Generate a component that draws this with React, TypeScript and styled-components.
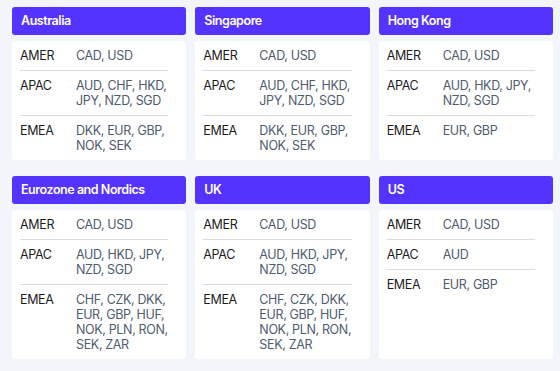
import React from "react";
import styled, { createGlobalStyle } from "styled-components";

type Region = { name: string; currencies: string };
type Centre = { title: string; regions: Region[] };

const centres: Centre[] = [
  {
    title: "Australia",
    regions: [
      { name: "AMER", currencies: "CAD, USD" },
      { name: "APAC", currencies: "AUD, CHF, HKD, JPY, NZD, SGD" },
      { name: "EMEA", currencies: "DKK, EUR, GBP, NOK, SEK" },
    ],
  },
  {
    title: "Singapore",
    regions: [
      { name: "AMER", currencies: "CAD, USD" },
      { name: "APAC", currencies: "AUD, CHF, HKD, JPY, NZD, SGD" },
      { name: "EMEA", currencies: "DKK, EUR, GBP, NOK, SEK" },
    ],
  },
  {
    title: "Hong Kong",
    regions: [
      { name: "AMER", currencies: "CAD, USD" },
      { name: "APAC", currencies: "AUD, HKD, JPY, NZD, SGD" },
      { name: "EMEA", currencies: "EUR, GBP" },
    ],
  },
  {
    title: "Eurozone and Nordics",
    regions: [
      { name: "AMER", currencies: "CAD, USD" },
      { name: "APAC", currencies: "AUD, HKD, JPY, NZD, SGD" },
      {
        name: "EMEA",
        currencies: "CHF, CZK, DKK, EUR, GBP, HUF, NOK, PLN, RON, SEK, ZAR",
      },
    ],
  },
  {
    title: "UK",
    regions: [
      { name: "AMER", currencies: "CAD, USD" },
      { name: "APAC", currencies: "AUD, HKD, JPY, NZD, SGD" },
      {
        name: "EMEA",
        currencies: "CHF, CZK, DKK, EUR, GBP, HUF, NOK, PLN, RON, SEK, ZAR",
      },
    ],
  },
  {
    title: "US",
    regions: [
      { name: "AMER", currencies: "CAD, USD" },
      { name: "APAC", currencies: "AUD" },
      { name: "EMEA", currencies: "EUR, GBP" },
    ],
  },
];

const GlobalStyle = createGlobalStyle`
  body {
    margin: 0;
    background: #f2f5f9;
    font-family: Inter, "Liberation Sans", sans-serif;
  }
`;

export default function App() {
  return (
    <>
      <GlobalStyle />
      <Grid>
        {centres.map((centre) => (
          <Card key={centre.title}>
            <CardHeader>{centre.title}</CardHeader>
            <CardBody>
              {centre.regions.map((region) => (
                <Row key={region.name}>
                  <RegionName>{region.name}</RegionName>
                  <Currencies>{region.currencies}</Currencies>
                </Row>
              ))}
            </CardBody>
          </Card>
        ))}
      </Grid>
    </>
  );
}

const Grid = styled.div`
  display: grid;
  grid-template-columns: repeat(3, 1fr);
  column-gap: 9px;
  row-gap: 16px;
  padding: 7px 7px 0 12px;
`;

const Card = styled.div`
  display: flex;
  flex-direction: column;
  gap: 6px;
`;

const CardHeader = styled.div`
  background: #5533ff;
  color: #ffffff;
  font-size: 12.5px;
  font-weight: 600;
  letter-spacing: -0.45px;
  line-height: 16px;
  padding: 6px 9px;
  border-radius: 3px;
`;

const CardBody = styled.div`
  flex: 1;
  background: #ffffff;
  border-radius: 3px;
  padding: 0 18px 0 8px;
`;

const Row = styled.div`
  display: grid;
  grid-template-columns: 56px 1fr;
  padding: 7px 0;
  font-size: 12.5px;
  letter-spacing: -0.35px;
  line-height: 15px;

  & + & {
    border-top: 1px solid #d9dbe0;
  }
`;

const RegionName = styled.div`
  color: #1c1c1e;
`;

const Currencies = styled.div`
  color: #4f5b6e;
`;
